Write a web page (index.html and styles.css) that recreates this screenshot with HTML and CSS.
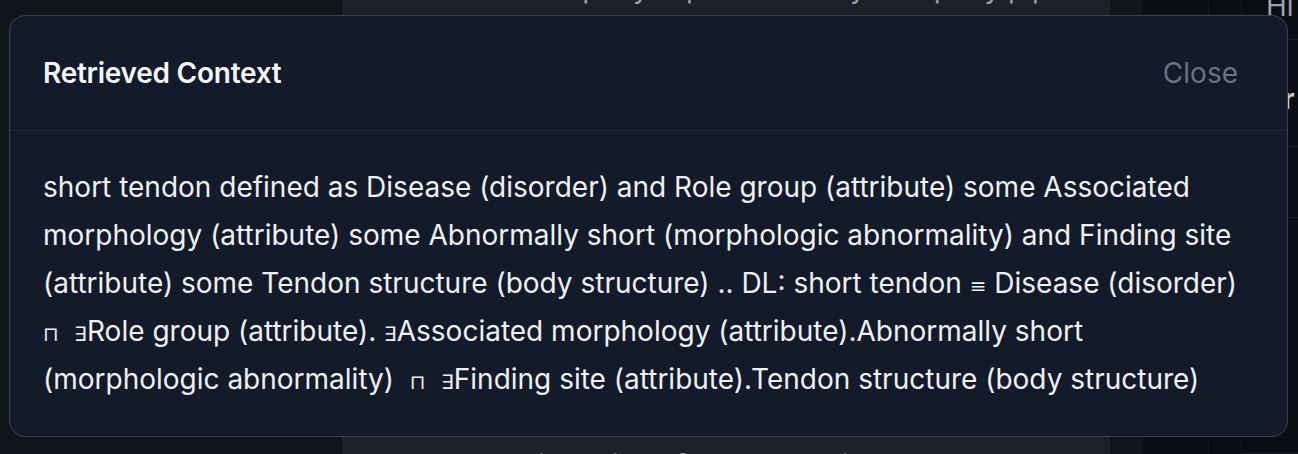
FILE: index.html
```html
<!DOCTYPE html>
<html lang="en">
<head>
<meta charset="utf-8">
<title>Retrieved Context</title>
<link rel="stylesheet" href="styles.css">
</head>
<body>
<div class="app">
  <aside class="sidebar"></aside>
  <main class="main">
    <p class="bg-line top">query is processed by the query pipeline and mapped onto your ontology</p>
    <p class="bg-line bottom">the answer is derived from the retrieved context and the ontology</p>
  </main>
  <div class="gutter"></div>
  <section class="right">
    <div class="col narrow"></div>
    <div class="col narrow"></div>
    <div class="col wide">
      <div class="cell c1">Hi</div>
      <div class="cell c2">or</div>
      <div class="cell c3">y</div>
      <div class="cell c4"></div>
    </div>
  </section>
</div>

<div class="modal">
  <header class="modal-head">
    <h2 class="modal-title">Retrieved Context</h2>
    <button class="close-btn" type="button">Close</button>
  </header>
  <div class="modal-body">
    <p>short tendon defined as Disease (disorder) and Role group (attribute) some Associated morphology (attribute) some Abnormally short (morphologic abnormality) and Finding site (attribute) some Tendon structure (body structure) .. DL: short tendon <span class="sym">≡</span> Disease (disorder) <span class="sym">⊓</span>&nbsp; <span class="sym">∃</span>Role group (attribute). <span class="sym">∃</span>Associated morphology (attribute).Abnormally short (morphologic abnormality) &nbsp;<span class="sym">⊓</span>&nbsp; <span class="sym">∃</span>Finding site (attribute).Tendon structure (body structure)</p>
  </div>
</div>
</body>
</html>
```

FILE: styles.css
```css
* { box-sizing: border-box; }

html, body {
  margin: 0;
  padding: 0;
  height: 100%;
}

body {
  background: #0e1118;
  font-family: Inter, "Noto Sans", "DejaVu Sans", sans-serif;
  overflow: hidden;
}

.app {
  display: flex;
  height: 454px;
}

.sidebar {
  width: 342px;
  background: #10141b;
  border-right: 1px solid #0c0f15;
}

.main {
  width: 768px;
  background: #1c2029;
  display: flex;
  flex-direction: column;
  justify-content: space-between;
  overflow: hidden;
}

.bg-line {
  margin: 0;
  color: #9aa0ab;
  font-size: 28px;
  line-height: 32px;
  white-space: nowrap;
}

.bg-line.top { margin-top: -28px; padding-left: 230px; }
.bg-line.bottom { margin-bottom: -27px; padding-left: 42px; }

.gutter {
  width: 33px;
  background: #11141b;
}

.right {
  flex: 1;
  display: flex;
  background: #0a0d14;
}

.col.narrow {
  width: 33px;
  border-right: 1px solid #151922;
}

.col.narrow:first-child { width: 66px; }

.col.wide {
  flex: 1;
  display: flex;
  flex-direction: column;
}

.cell {
  color: #9ca3af;
  font-size: 28px;
  padding-left: 24px;
  border-bottom: 1px solid #1a1f29;
  overflow: hidden;
  white-space: nowrap;
}

.c1 { height: 40px; line-height: 12px; }
.c2 { height: 107px; line-height: 118px; font-weight: 700; color: #c7ccd4; }
.c3 { height: 71px; line-height: 76px; }
.c4 { flex: 1; }

/* Modal */
.modal {
  position: absolute;
  left: 9px;
  top: 15px;
  width: 1279px;
  height: 422px;
  background: #131a29;
  border: 1px solid #3a4356;
  border-radius: 16px;
  display: flex;
  flex-direction: column;
  overflow: hidden;
}

.modal-head {
  height: 115px;
  flex: none;
  display: flex;
  align-items: center;
  justify-content: space-between;
  padding: 0 32px 0 33px;
  border-bottom: 1px solid #252d3c;
}

.modal-title {
  margin: 0;
  font-size: 28px;
  font-weight: 600;
  color: #f3f4f6;
  letter-spacing: -0.25px;
}

.close-btn {
  background: none;
  border: none;
  font-family: inherit;
  font-size: 28px;
  color: #6b7280;
  padding: 4px 17px;
  cursor: pointer;
}

.modal-body {
  padding: 32px 32px 0 33px;
}

.modal-body p {
  margin: 0;
  font-size: 28px;
  line-height: 48px;
  color: #eef0f3;
}

.sym {
  font-family: "DejaVu Sans", sans-serif;
  font-size: 20px;
  line-height: 1;
}
```
